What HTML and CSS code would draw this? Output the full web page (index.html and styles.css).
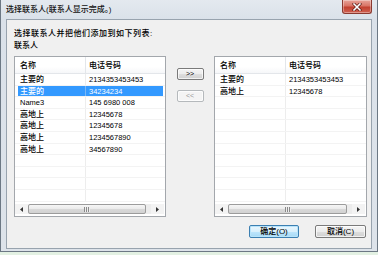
FILE: index.html
```html
<!DOCTYPE html>
<html>
<head>
<meta charset="utf-8">
<link rel="stylesheet" href="styles.css">
</head>
<body>
<div class="window">
  <div class="titlebar">
    <span class="title">选择联系人(联系人显示完成。)</span>
    <div class="close">
      <svg width="10" height="8" viewBox="0 0 10 8">
        <path d="M2 1 L8 7 M8 1 L2 7" stroke="#5a1a14" stroke-width="3" stroke-linecap="square"/>
        <path d="M2 1 L8 7 M8 1 L2 7" stroke="#ffffff" stroke-width="1.6" stroke-linecap="square"/>
      </svg>
    </div>
  </div>
  <div class="client">
    <div class="prompt">选择联系人并把他们添加到如下列表:</div>
    <div class="label">联系人</div>
    <div class="lists">
      <div class="listview">
        <div class="rows">
          <div class="row header"><div class="c1">名称</div><div class="c2">电话号码</div></div>
          <div class="row"><div class="c1">主要的</div><div class="c2 num">2134353453453</div></div>
          <div class="row sel"><div class="c1">主要的</div><div class="c2 num">34234234</div></div>
          <div class="row"><div class="c1 latin">Name3</div><div class="c2 num">145 6980 008</div></div>
          <div class="row"><div class="c1">高地上</div><div class="c2 num">12345678</div></div>
          <div class="row"><div class="c1">高地上</div><div class="c2 num">12345678</div></div>
          <div class="row"><div class="c1">高地上</div><div class="c2 num">1234567890</div></div>
          <div class="row"><div class="c1">高地上</div><div class="c2 num">34567890</div></div>
          <div class="row"><div class="c1"></div><div class="c2"></div></div>
          <div class="row"><div class="c1"></div><div class="c2"></div></div>
          <div class="row"><div class="c1"></div><div class="c2"></div></div>
          <div class="row"><div class="c1"></div><div class="c2"></div></div>
        </div>
        <div class="hscroll">
          <div class="arrow"><svg width="3" height="5" viewBox="0 0 3 5"><path d="M3 0 L0 2.5 L3 5 Z" fill="#333"/></svg></div>
          <div class="track"><div class="thumb"><span class="grip"></span></div></div>
          <div class="arrow"><svg width="3" height="5" viewBox="0 0 3 5"><path d="M0 0 L3 2.5 L0 5 Z" fill="#333"/></svg></div>
        </div>
      </div>
      <div class="mid">
        <button class="btn small">&gt;&gt;</button>
        <button class="btn small disabled">&lt;&lt;</button>
      </div>
      <div class="listview">
        <div class="rows">
          <div class="row header"><div class="c1">名称</div><div class="c2">电话号码</div></div>
          <div class="row"><div class="c1">主要的</div><div class="c2 num">2134353453453</div></div>
          <div class="row"><div class="c1">高地上</div><div class="c2 num">12345678</div></div>
          <div class="row"><div class="c1"></div><div class="c2"></div></div>
          <div class="row"><div class="c1"></div><div class="c2"></div></div>
          <div class="row"><div class="c1"></div><div class="c2"></div></div>
          <div class="row"><div class="c1"></div><div class="c2"></div></div>
          <div class="row"><div class="c1"></div><div class="c2"></div></div>
          <div class="row"><div class="c1"></div><div class="c2"></div></div>
          <div class="row"><div class="c1"></div><div class="c2"></div></div>
          <div class="row"><div class="c1"></div><div class="c2"></div></div>
          <div class="row"><div class="c1"></div><div class="c2"></div></div>
        </div>
        <div class="hscroll">
          <div class="arrow"><svg width="3" height="5" viewBox="0 0 3 5"><path d="M3 0 L0 2.5 L3 5 Z" fill="#333"/></svg></div>
          <div class="track"><div class="thumb"><span class="grip"></span></div></div>
          <div class="arrow"><svg width="3" height="5" viewBox="0 0 3 5"><path d="M0 0 L3 2.5 L0 5 Z" fill="#333"/></svg></div>
        </div>
      </div>
    </div>
    <div class="actions">
      <button class="btn wide default">确定(O)</button>
      <button class="btn wide">取消(C)</button>
    </div>
  </div>
</div>
</body>
</html>
```

FILE: styles.css
```css
* { box-sizing: border-box; }
html, body { margin: 0; padding: 0; }
body {
  width: 378px;
  height: 255px;
  overflow: hidden;
  background: #e3f1e3;
  font-family: "Liberation Sans", "Noto Sans CJK SC", sans-serif;
  font-size: 8px;
  font-weight: 500;
  color: #000;
}
.window {
  width: 378px;
  height: 252px;
  background: linear-gradient(to bottom, #e4e9ef 0px, #dae1e9 20px, #dde3ea 100%);
  border-left: 1px solid #6c7884;
  border-right: 1px solid #6c7884;
  border-bottom: 1px solid #6c7884;
  display: flex;
  flex-direction: column;
}
.titlebar {
  height: 19px;
  display: flex;
  align-items: flex-start;
}
.title {
  padding-left: 5px;
  line-height: 19px;
  font-size: 8px;
  color: #111;
  white-space: nowrap;
}
.close {
  margin-left: auto;
  margin-right: 5px;
  width: 30px;
  height: 14px;
  border: 1px solid #8a3a30;
  border-top: none;
  border-radius: 0 0 3px 3px;
  background: linear-gradient(to bottom, #e8a499 0%, #d97466 45%, #c2402f 55%, #cf6252 100%);
  display: flex;
  align-items: center;
  justify-content: center;
  box-shadow: inset 0 0 0 1px rgba(255,255,255,0.35);
}
.client {
  margin: 0 5px 0 5px;
  height: 230px;
  border: 1px solid #98a3ae;
  background: #f0f0f0;
  padding: 8px 4px 0 7px;
  display: flex;
  flex-direction: column;
}
.prompt, .label {
  line-height: 12px;
  height: 12px;
  white-space: nowrap;
}
.prompt { letter-spacing: 0.5px; }
.lists {
  margin-top: 4px;
  display: flex;
  height: 161px;
}
.listview {
  width: 152px;
  height: 161px;
  border: 1px solid #a3a7ac;
  background: #fff;
  display: flex;
  flex-direction: column;
}
.listview:last-child { width: 153px; }
.rows {
  flex: 1;
  overflow: hidden;
}
.row {
  display: flex;
  height: 11.6px;
  line-height: 11.6px;
  white-space: nowrap;
}
.row .c1 {
  width: 71px;
  padding-left: 5px;
  border-right: 1px solid #ededed;
  overflow: hidden;
}
.row .c2 {
  flex: 1;
  padding-left: 3px;
  overflow: hidden;
}
.row:not(.header) {
  border-bottom: 1px solid #f3f3f3;
}
.row.header {
  height: 17px;
  line-height: 17px;
  background: linear-gradient(to bottom, #ffffff 0%, #ffffff 60%, #f6f7f9 100%);
  border-bottom: 1px solid #e3e6ea;
}
.row.header .c1 { border-right: 1px solid #e3e6ea; }
.num { font-size: 7.5px; }
.latin { font-size: 7.5px; }
.row.sel {
  background: linear-gradient(to right, transparent 3px, #3399ff 3px, #3399ff calc(100% - 2px), transparent calc(100% - 2px));
  color: #fff;
}
.row.sel .c1 { border-right-color: #7ab8f5; }
.hscroll {
  height: 12px;
  display: flex;
  align-items: stretch;
  padding: 0 1px 2px 0;
  background: #fff;
}
.hscroll .arrow {
  width: 13px;
  display: flex;
  align-items: center;
  justify-content: center;
  background: #f3f3f3;
}
.hscroll .track {
  flex: 1;
  background: #ececec;
  display: flex;
}
.hscroll .thumb {
  width: 96%;
  border: 1px solid #9c9c9c;
  border-radius: 2px;
  background: linear-gradient(to bottom, #f6f6f6 0%, #eaeaea 50%, #d9d9d9 51%, #d2d2d2 100%);
  display: flex;
  align-items: center;
  justify-content: center;
}
.grip {
  width: 6px;
  height: 5px;
  background: repeating-linear-gradient(to right, #8a8a8a 0px, #8a8a8a 1px, #eeeeee 1px, #eeeeee 2px);
}
.mid {
  width: 48px;
  display: flex;
  flex-direction: column;
  align-items: center;
  padding-top: 12px;
  gap: 10px;
}
.btn {
  font-family: "Liberation Sans", "Noto Sans CJK SC", sans-serif;
  font-size: 8px;
  font-weight: 500;
  color: #000;
  margin: 0;
  padding: 0;
  border: 1px solid #7a7a7a;
  border-radius: 2px;
  background: linear-gradient(to bottom, #f4f4f4 0%, #ececec 50%, #dedede 51%, #d0d0d0 100%);
  box-shadow: inset 0 0 0 1px rgba(255,255,255,0.7);
  display: flex;
  align-items: center;
  justify-content: center;
  line-height: 10px;
}
.btn.small {
  width: 27px;
  height: 12px;
  font-size: 7px;
}
.btn.disabled {
  color: #9a9a9a;
  border-color: #b5b9bc;
  background: #f4f4f4;
}
.actions {
  margin-top: 8px;
  display: flex;
  justify-content: flex-end;
  gap: 16px;
  padding-right: 1px;
}
.btn.wide {
  width: 51px;
  height: 13px;
}
.btn.default {
  width: 50px;
  border-color: #3c7fb1;
  background: linear-gradient(to bottom, #eaf6fd 0%, #d9f0fc 50%, #bee6fd 51%, #a7d9f5 100%);
  box-shadow: inset 0 0 0 1px #b8e4fb;
}
```
